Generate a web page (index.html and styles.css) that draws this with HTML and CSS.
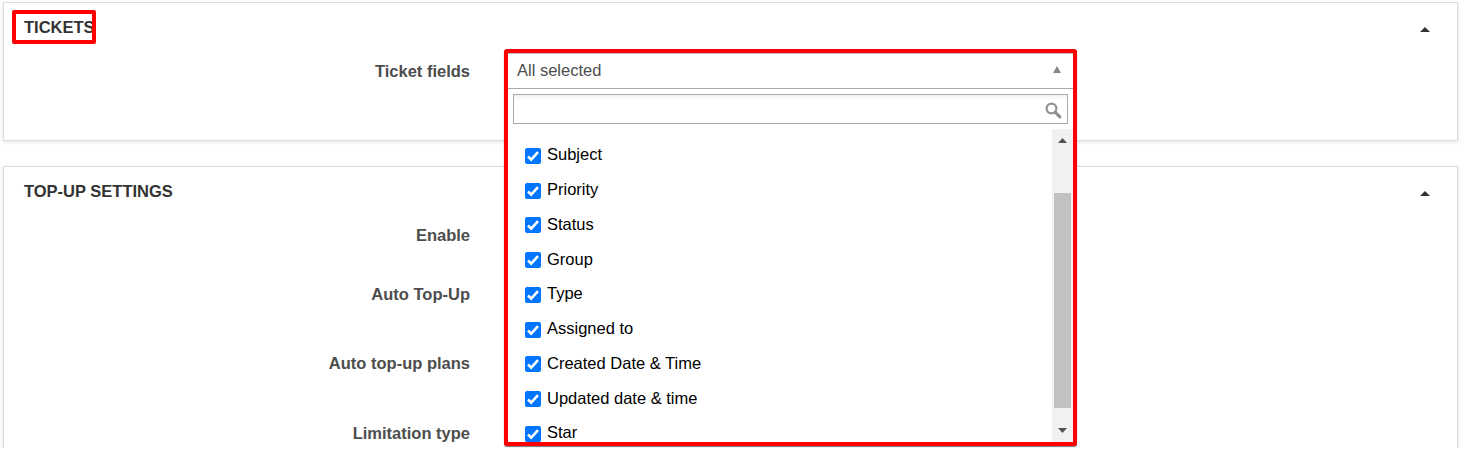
FILE: index.html
```html
<!DOCTYPE html>
<html lang="en">
<head>
<meta charset="utf-8">
<title>Settings</title>
<link rel="stylesheet" href="styles.css">
</head>
<body>
<main class="page">
  <section class="panel panel-tickets">
    <header class="panel-head"><h2>TICKETS</h2><svg class="caret" width="10" height="5" viewBox="0 0 10 5"><path d="M5 0L10 5H0z"/></svg></header>
    <div class="row"><div class="label">Ticket fields</div></div>
    <div class="title-mark"></div>
    <div class="dropdown">
      <div class="selected"><span>All selected</span><svg width="8" height="7" viewBox="0 0 8 7"><path d="M4 0L8 7H0z" fill="#888"/></svg></div>
      <div class="search"><svg width="17" height="17" viewBox="0 0 17 17" fill="none" stroke="#909090"><circle cx="6.5" cy="6.5" r="4.9" stroke-width="2.2"/><path d="M10.2 10.2l4.6 4.6" stroke-width="3.2" stroke-linecap="round"/></svg></div>
      <div class="list">
        <ul class="items">
          <li><i class="check"><svg viewBox="0 0 16 16"><path d="M3 8.5l3.2 3.2L13 4.2"/></svg></i><span>Subject</span></li>
          <li><i class="check"><svg viewBox="0 0 16 16"><path d="M3 8.5l3.2 3.2L13 4.2"/></svg></i><span>Priority</span></li>
          <li><i class="check"><svg viewBox="0 0 16 16"><path d="M3 8.5l3.2 3.2L13 4.2"/></svg></i><span>Status</span></li>
          <li><i class="check"><svg viewBox="0 0 16 16"><path d="M3 8.5l3.2 3.2L13 4.2"/></svg></i><span>Group</span></li>
          <li><i class="check"><svg viewBox="0 0 16 16"><path d="M3 8.5l3.2 3.2L13 4.2"/></svg></i><span>Type</span></li>
          <li><i class="check"><svg viewBox="0 0 16 16"><path d="M3 8.5l3.2 3.2L13 4.2"/></svg></i><span>Assigned to</span></li>
          <li><i class="check"><svg viewBox="0 0 16 16"><path d="M3 8.5l3.2 3.2L13 4.2"/></svg></i><span>Created Date &amp; Time</span></li>
          <li><i class="check"><svg viewBox="0 0 16 16"><path d="M3 8.5l3.2 3.2L13 4.2"/></svg></i><span>Updated date &amp; time</span></li>
          <li><i class="check"><svg viewBox="0 0 16 16"><path d="M3 8.5l3.2 3.2L13 4.2"/></svg></i><span>Star</span></li>
        </ul>
        <div class="scrollbar">
          <svg width="9" height="5" viewBox="0 0 9 5"><path d="M4.5 0L9 5H0z"/></svg>
          <div class="thumb"></div>
          <svg width="9" height="5" viewBox="0 0 9 5"><path d="M0 0H9L4.5 5z"/></svg>
        </div>
      </div>
    </div>
  </section>
  <section class="panel panel-topup">
    <header class="panel-head"><h2>TOP-UP SETTINGS</h2><svg class="caret" width="10" height="5" viewBox="0 0 10 5"><path d="M5 0L10 5H0z"/></svg></header>
    <div class="row row-enable"><div class="label">Enable</div></div>
    <div class="row row-auto"><div class="label">Auto Top-Up</div></div>
    <div class="row row-plans"><div class="label">Auto top-up plans</div></div>
    <div class="row"><div class="label">Limitation type</div></div>
  </section>
</main>
</body>
</html>
```
FILE: styles.css
```css
* { box-sizing: border-box; }
body { margin: 0; background: #fff; font: 16.5px/20px "Liberation Sans", Arial, sans-serif; overflow: hidden; }
.page { height: 448px; padding: 2px 5px 0 3px; overflow: hidden; }
.panel { position: relative; border: 1px solid #dcdcdc; box-shadow: 0 1px 4px rgba(0,0,0,.12); background: #fff; }
.panel-tickets { height: 139px; margin-bottom: 25px; z-index: 2; }
.panel-topup { height: 300px; }
.panel-head { display: flex; align-items: center; justify-content: space-between; height: 48px; padding: 0 27px 0 20px; }
.panel-head h2 { margin: 0; font-size: 16.5px; line-height: 20px; color: #333; }
.caret { fill: #333; margin-top: 5px; }
.row { display: flex; height: 40px; }
.label { width: 466px; text-align: right; font-weight: bold; line-height: 40px; color: #4d4d4d; }
.row-enable { height: 59px; }
.row-auto { height: 69px; }
.row-plans { height: 70px; }
.title-mark { position: absolute; left: 8px; top: 7px; width: 84px; height: 34px; border: 4px solid #f00; border-radius: 2px; }
.dropdown { position: absolute; left: 500px; top: 46px; width: 573px; height: 397px; border: 4px solid #f00; border-radius: 3px; background: #fff; box-shadow: 0 1px 1px #777; overflow: hidden; }
.selected { display: flex; align-items: center; justify-content: space-between; height: 36px; padding: 0 12px 0 9px; border-top: 1px solid #bbb; border-bottom: 1px solid #aaa; color: #4d4d4d; }
.selected span { margin-bottom: 2px; }
.selected svg { margin-bottom: 4px; }
.search { display: flex; align-items: center; justify-content: flex-end; margin: 5px; height: 30px; border: 1px solid #aaa; padding: 2px 5px 0 0; background: linear-gradient(#f3f3f3, #fff 6px); }
.list { display: flex; height: 313px; }
.items { flex: 1; margin: 0; padding: 8px 0 0 17px; list-style: none; overflow: hidden; }
.items li { display: flex; align-items: center; height: 34.75px; color: #000; }
.items span { margin-left: 6px; }
.check { width: 16px; height: 16px; margin-top: 3px; border-radius: 2px; background: #0075ff; }
.check svg { display: block; fill: none; stroke: #fff; stroke-width: 2.6; }
.scrollbar { width: 21px; background: #f1f1f1; display: flex; flex-direction: column; align-items: center; padding: 9px 0 9px; justify-content: space-between; fill: #505050; }
.thumb { width: 17px; height: 215px; margin-top: 30px; background: #c1c1c1; }
```
